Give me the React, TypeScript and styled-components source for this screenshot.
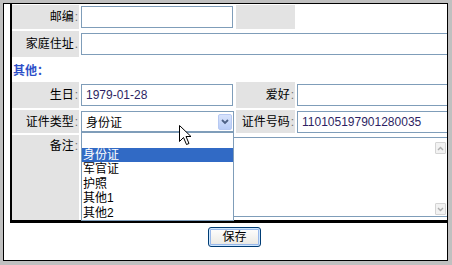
import React, { FC } from "react";
import styled, { createGlobalStyle } from "styled-components";

const GlobalStyle = createGlobalStyle`
  html, body {
    margin: 0;
    padding: 0;
    background: #c0c0c0;
  }
  body {
    font-family: "Liberation Sans", "Noto Sans CJK SC", sans-serif;
    font-size: 12px;
  }
`;

const idTypes = ["", "身份证", "军官证", "护照", "其他1", "其他2"];

const App: FC = () => {
  return (
    <Screen>
      <GlobalStyle />
      <Frame>
        <Form>
          <Label>
            邮编<Colon>:</Colon>
          </Label>
          <Cell>
            <Field defaultValue="" />
          </Cell>
          <Label />
          <Cell />

          <Label>
            家庭住址<Colon>.</Colon>
          </Label>
          <Cell $span>
            <Field $w="372px" defaultValue="" />
          </Cell>

          <Section>其他：</Section>

          <Label>
            生日<Colon>:</Colon>
          </Label>
          <Cell>
            <Field defaultValue="1979-01-28" />
          </Cell>
          <Label>
            爱好<Colon>:</Colon>
          </Label>
          <Cell>
            <Field $w="160px" defaultValue="" />
          </Cell>

          <Label>
            证件类型<Colon>:</Colon>
          </Label>
          <Cell>
            <SelectBox>
              <span>身份证</span>
              <ArrowButton>
                <svg width="8" height="6" viewBox="0 0 8 6">
                  <path d="M1 1 L4 4 L7 1" fill="none" stroke="#4d6185" strokeWidth="1.8" />
                </svg>
              </ArrowButton>
              <OptionList>
                {idTypes.map((t, i) => (
                  <OptionItem key={i} $selected={t === "身份证"}>
                    {t}
                  </OptionItem>
                ))}
              </OptionList>
              <Pointer width="14" height="22" viewBox="0 0 14 22">
                <path
                  d="M0.5 0.5 L0.5 16.5 L4.5 12.5 L7.5 19.5 L10 18.5 L7 11.5 L12 11.5 Z"
                  fill="#fff"
                  stroke="#000"
                  strokeWidth="1"
                />
              </Pointer>
            </SelectBox>
          </Cell>
          <Label>
            证件号码<Colon>:</Colon>
          </Label>
          <Cell>
            <Field $w="160px" defaultValue="110105197901280035" />
          </Cell>

          <Label $top>
            备注<Colon>:</Colon>
          </Label>
          <Cell $span $top>
            <MemoBox>
              <Memo defaultValue="" />
              <ScrollBar>
                <ScrollButton>
                  <svg width="7" height="5" viewBox="0 0 7 5">
                    <path d="M1 4 L3.5 1.5 L6 4" fill="none" stroke="#adadad" strokeWidth="1.4" />
                  </svg>
                </ScrollButton>
                <ScrollButton>
                  <svg width="7" height="5" viewBox="0 0 7 5">
                    <path d="M1 1 L3.5 3.5 L6 1" fill="none" stroke="#adadad" strokeWidth="1.4" />
                  </svg>
                </ScrollButton>
              </ScrollBar>
            </MemoBox>
          </Cell>
        </Form>
        <Footer>
          <SaveButton>保存</SaveButton>
        </Footer>
      </Frame>
    </Screen>
  );
};

const Screen = styled.div`
  width: 452px;
  height: 265px;
  box-sizing: border-box;
  padding: 3px 4px 4px 3px;
  background: #c0c0c0;
`;

const Frame = styled.div`
  height: 258px;
  box-sizing: border-box;
  border: 1px solid #000;
  background: #fff;
  overflow: hidden;
`;

const Form = styled.div`
  width: 449px;
  margin-left: 6px;
  box-sizing: border-box;
  padding-top: 1px;
  border-left: 2px solid #000;
  border-bottom: 3px solid #000;
  display: grid;
  grid-template-columns: 67px 153px 59px 1fr;
  grid-template-rows: 24px 26px 21px 26px 23px 85px;
  column-gap: 2px;
  row-gap: 2px;
`;

const Label = styled.div<{ $top?: boolean }>`
  background: #e3e3e3;
  color: #000;
  display: flex;
  justify-content: flex-end;
  align-items: ${(p) => (p.$top ? "flex-start" : "center")};
  padding: ${(p) => (p.$top ? "4px 1px 0 0" : "0 1px 0 0")};
  white-space: nowrap;
  line-height: 14px;
`;

const Colon = styled.span`
  color: #6f6f6f;
  margin-left: 1px;
`;

const Cell = styled.div<{ $span?: boolean; $top?: boolean }>`
  grid-column: ${(p) => (p.$span ? "2 / 5" : "auto")};
  display: flex;
  align-items: ${(p) => (p.$top ? "flex-start" : "center")};
  padding-top: ${(p) => (p.$top ? "2px" : "0")};
  min-width: 0;
  position: relative;
`;

const Section = styled.div`
  grid-column: 1 / -1;
  display: flex;
  align-items: center;
  padding-left: 1px;
  color: #2d4fc8;
  font-weight: bold;
`;

const Field = styled.input<{ $w?: string }>`
  width: ${(p) => p.$w ?? "152px"};
  height: 22px;
  box-sizing: border-box;
  flex-shrink: 0;
  border: 1px solid #7f9db9;
  padding: 0 4px;
  margin: 0;
  font-family: "Liberation Sans", "Noto Sans CJK SC", sans-serif;
  font-size: 12px;
  color: #2e1f63;
  background: #fff;
  outline: none;
`;

const SelectBox = styled.div`
  position: relative;
  width: 153px;
  height: 21px;
  box-sizing: border-box;
  border: 1px solid #7f9db9;
  display: flex;
  align-items: center;
  justify-content: space-between;
  padding-left: 4px;
  padding-right: 1px;
  color: #000;
  background: #fff;
  z-index: 2;
`;

const ArrowButton = styled.div`
  width: 14px;
  height: 16px;
  box-sizing: border-box;
  border: 1px solid #b7c9f2;
  border-radius: 2px;
  background: linear-gradient(#d8e3fc, #b9cdf7);
  display: flex;
  align-items: center;
  justify-content: center;
`;

const OptionList = styled.div`
  position: absolute;
  left: -1px;
  top: 20px;
  width: 153px;
  box-sizing: border-box;
  border: 1px solid #7f9db9;
  background: #fff;
`;

const OptionItem = styled.div<{ $selected?: boolean }>`
  height: 14.5px;
  line-height: 14.5px;
  padding-left: 1px;
  background: ${(p) => (p.$selected ? "#316ac5" : "#fff")};
  color: ${(p) => (p.$selected ? "#fff" : "#000")};
  white-space: nowrap;
`;

const Pointer = styled.svg`
  position: absolute;
  left: 97px;
  top: 13px;
  z-index: 3;
`;

const MemoBox = styled.div`
  width: 367px;
  height: 80px;
  flex-shrink: 0;
  box-sizing: border-box;
  border: 1px solid #7f9db9;
  display: flex;
  background: #fff;
`;

const Memo = styled.textarea`
  flex: 1;
  border: none;
  margin: 0;
  padding: 2px;
  resize: none;
  outline: none;
  overflow: hidden;
  font-family: "Liberation Sans", "Noto Sans CJK SC", sans-serif;
  font-size: 12px;
`;

const ScrollBar = styled.div`
  width: 11px;
  margin-right: 1px;
  padding: 4px 0 1px;
  display: flex;
  flex-direction: column;
  justify-content: space-between;
`;

const ScrollButton = styled.div`
  height: 12px;
  box-sizing: border-box;
  border: 1px solid #d4d4d4;
  border-radius: 1px;
  background: #f2f2f2;
  display: flex;
  align-items: center;
  justify-content: center;
`;

const Footer = styled.div`
  width: 449px;
  margin-left: 6px;
  padding-top: 4px;
  display: flex;
  justify-content: center;
`;

const SaveButton = styled.button`
  width: 53px;
  height: 20px;
  padding: 0;
  border: 1px solid #003c74;
  border-radius: 3px;
  background: linear-gradient(#ffffff, #ecebe6 85%, #d6d0c5);
  box-shadow: inset 0 0 0 1px #cee7ff, inset 0 0 0 2px #98b8ea;
  font-family: "Liberation Sans", "Noto Sans CJK SC", sans-serif;
  font-size: 12px;
  color: #000;
  line-height: 16px;
`;

export default App;
